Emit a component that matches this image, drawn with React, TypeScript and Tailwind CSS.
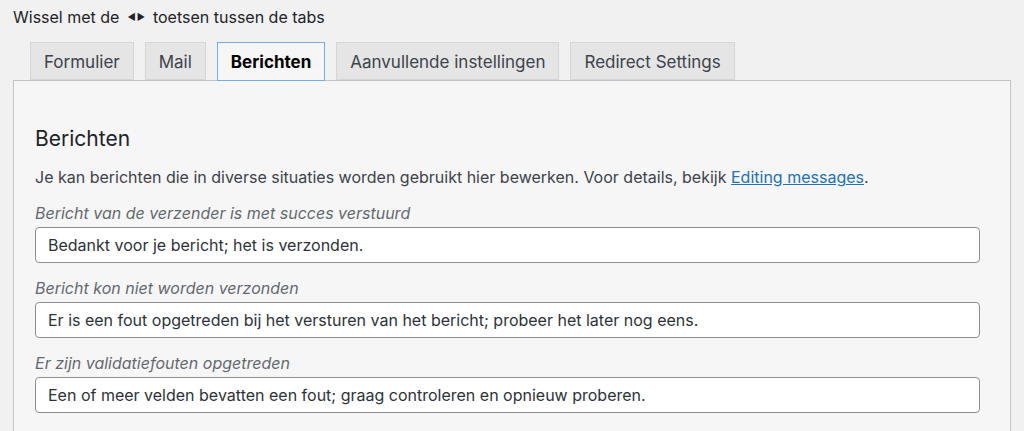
import React from "react"

export default function App() {
  const tabs = ["Formulier", "Mail", "Berichten", "Aanvullende instellingen", "Redirect Settings"]
  const messages = [
    {
      label: "Bericht van de verzender is met succes verstuurd",
      value: "Bedankt voor je bericht; het is verzonden.",
    },
    {
      label: "Bericht kon niet worden verzonden",
      value: "Er is een fout opgetreden bij het versturen van het bericht; probeer het later nog eens.",
    },
    {
      label: "Er zijn validatiefouten opgetreden",
      value: "Een of meer velden bevatten een fout; graag controleren en opnieuw proberen.",
    },
  ]

  return (
    <div className="h-[431px] w-[1024px] overflow-hidden bg-[#f1f1f1] pl-[13px] pt-[8px] font-['Inter',sans-serif] text-[#1d2327]">
      <p className="flex items-center text-[16px] leading-[18px]">
        Wissel met de
        <span className="mx-[8px] inline-flex items-center gap-[1px] text-[9px]">
          <span>◀</span>
          <span>▶</span>
        </span>
        toetsen tussen de tabs
      </p>

      {/* Tabs */}
      <div className="mt-[16px] flex gap-[11px] pl-[17px]">
        {tabs.map((tab) => (
          <div
            key={tab}
            className={
              tab === "Berichten"
                ? "relative z-10 -mb-px flex h-[39px] items-center border border-[#72aee6] bg-[#f6f6f6] px-[13px] pt-[3px] text-[17px] font-bold text-black"
                : "relative z-10 -mb-px flex h-[38px] items-center border border-[#d5d5d5] bg-[#e5e5e5] px-[13px] pt-[3px] text-[17px] text-[#3c434a]"
            }
          >
            {tab}
          </div>
        ))}
      </div>

      {/* Panel */}
      <div className="w-[998px] border border-[#c3c4c7] bg-[#f6f6f6] pb-[40px] pl-[21px] pr-[30px] pt-[45px]">
        <h2 className="text-[21px] leading-[26px] text-[#1d2327]">Berichten</h2>
        <p className="mt-[14px] text-[16px] leading-[22px] text-[#3c434a]">
          Je kan berichten die in diverse situaties worden gebruikt hier bewerken. Voor details, bekijk{" "}
          <a href="#" className="text-[#2271b1] underline">
            Editing messages
          </a>
          .
        </p>
        <div className="mt-[16px] flex flex-col gap-[16px]">
          {messages.map((m) => (
            <div key={m.label}>
              <p className="text-[16px] italic leading-[18px] text-[#646970]">{m.label}</p>
              <div className="mt-[5px] flex h-[36px] w-[945px] items-center rounded-[4px] border border-[#8c8f94] bg-white px-[12px] text-[16px] text-[#2c3338]">
                {m.value}
              </div>
            </div>
          ))}
        </div>
      </div>
    </div>
  )
}
